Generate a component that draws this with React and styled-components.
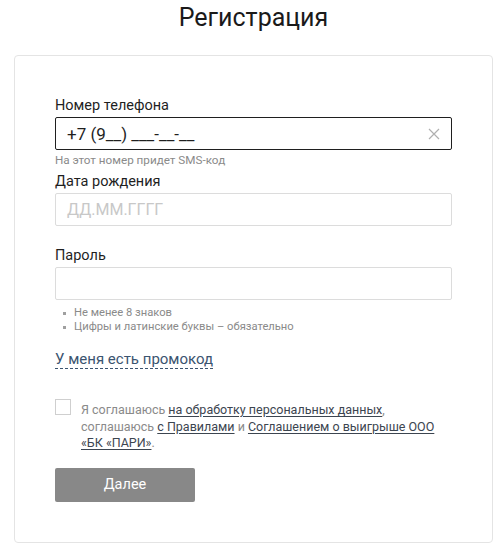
import React from 'react';
import styled, { createGlobalStyle } from 'styled-components';

const GlobalStyle = createGlobalStyle`
  body {
    margin: 0;
    background: #fff;
    font-family: Roboto, "Liberation Sans", sans-serif;
    color: #1f1f1f;
  }
`;

const Page = styled.div`
  width: 502px;
  padding: 2px 0 0 14px;
  box-sizing: border-box;
`;

const Title = styled.h1`
  margin: 0 0 21px;
  width: 479px;
  text-align: center;
  font-size: 25px;
  font-weight: 400;
  line-height: 32px;
  color: #1a1a1a;
`;

const Card = styled.div`
  width: 479px;
  height: 488px;
  box-sizing: border-box;
  border: 1px solid #e4e4e4;
  border-radius: 4px;
  padding: 38px 40px 0;
  display: flex;
  flex-direction: column;
`;

const Field = styled.div`
  display: flex;
  flex-direction: column;
`;

const Label = styled.label`
  font-size: 14.5px;
  line-height: 24px;
  height: 23px;
  margin-top: ${p => p.$top || 0}px;
  color: #1f1f1f;
`;

const InputBox = styled.div`
  display: flex;
  align-items: center;
  height: 33px;
  box-sizing: border-box;
  border: 1px solid ${p => (p.$active ? '#1f1f1f' : '#dcdcdc')};
  border-radius: 2px;
  padding: 0 11px;
`;

const Value = styled.span`
  flex: 1;
  font-size: ${p => (p.$placeholder ? 16 : 17)}px;
  color: ${p => (p.$placeholder ? '#c8c8c8' : '#1f1f1f')};
`;

const Hint = styled.div`
  font-size: 11.7px;
  line-height: 14px;
  margin-top: 3px;
  color: #8a8a8a;
`;

const Rules = styled.ul`
  margin: 6px 0 0;
  padding: 0 0 0 19px;
  list-style: none;
  font-size: 11.2px;
  line-height: 14px;
  color: #8a8a8a;

  li {
    position: relative;
  }
  li::before {
    content: '';
    position: absolute;
    left: -11px;
    top: 6px;
    width: 3px;
    height: 3px;
    background: #a0a0a0;
  }
`;

const Promo = styled.a`
  align-self: flex-start;
  margin-top: 16px;
  font-size: 15px;
  line-height: 18px;
  color: #3b5470;
  border-bottom: 1px dashed #3b5470;
  text-decoration: none;
`;

const Agree = styled.div`
  display: flex;
  gap: 10px;
  margin-top: 30px;
`;

const Check = styled.span`
  flex: none;
  width: 16px;
  height: 16px;
  box-sizing: border-box;
  border: 1px solid #cfcfcf;
`;

const AgreeText = styled.p`
  margin: 3px 0 0;
  font-size: 12.5px;
  line-height: 16.5px;
  color: #8a8a8a;
  width: 360px;
`;

const Link = styled.a`
  color: #3c4550;
  text-decoration: underline;
  text-underline-offset: 2px;
`;

const Button = styled.button`
  align-self: flex-start;
  margin-top: 16px;
  width: 140px;
  height: 34px;
  border: none;
  border-radius: 2px;
  background: #888888;
  color: #fff;
  font-family: inherit;
  font-size: 14.5px;
`;

const ClearIcon = () => (
  <svg width="12" height="12" viewBox="0 0 12 12">
    <path d="M1 1 L11 11 M11 1 L1 11" stroke="#b0b0b0" strokeWidth="1.2" />
  </svg>
);

export default function App() {
  return (
    <Page>
      <GlobalStyle />
      <Title>Регистрация</Title>
      <Card>
        <Field>
          <Label>Номер телефона</Label>
          <InputBox $active>
            <Value>+7 (9__) ___-__-__</Value>
            <ClearIcon />
          </InputBox>
          <Hint>На этот номер придет SMS-код</Hint>
        </Field>
        <Field>
          <Label $top={3}>Дата рождения</Label>
          <InputBox>
            <Value $placeholder>ДД.ММ.ГГГГ</Value>
          </InputBox>
        </Field>
        <Field>
          <Label $top={18}>Пароль</Label>
          <InputBox />
          <Rules>
            <li>Не менее 8 знаков</li>
            <li>Цифры и латинские буквы – обязательно</li>
          </Rules>
        </Field>
        <Promo>У меня есть промокод</Promo>
        <Agree>
          <Check />
          <AgreeText>
            Я соглашаюсь <Link>на обработку персональных данных</Link>,
            соглашаюсь <Link>с Правилами</Link> и <Link>Соглашением о выигрыше ООО
            «БК «ПАРИ»</Link>.
          </AgreeText>
        </Agree>
        <Button>Далее</Button>
      </Card>
    </Page>
  );
}
